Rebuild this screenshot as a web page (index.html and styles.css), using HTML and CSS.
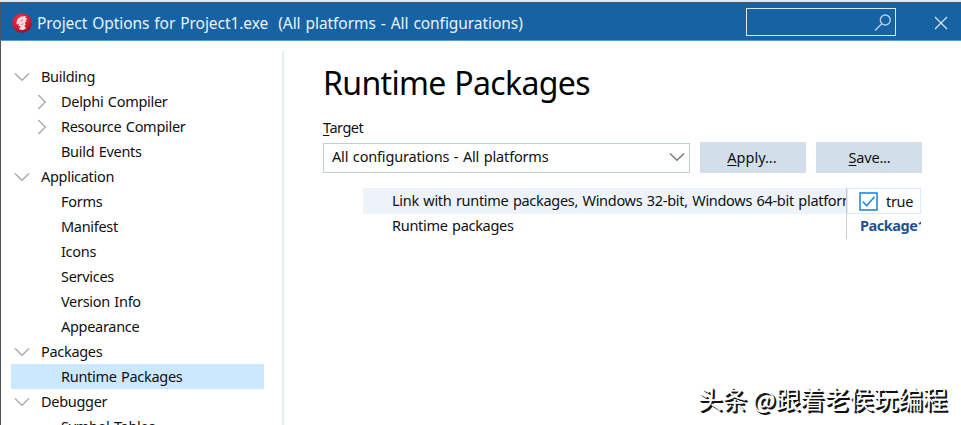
FILE: index.html
```
<!DOCTYPE html>
<html lang="en">
<head>
<meta charset="utf-8">
<title>Project Options</title>
<link rel="stylesheet" href="styles.css">
</head>
<body>
<svg class="defs" width="0" height="0" aria-hidden="true">
  <symbol id="down" viewBox="0 0 16 10"><path d="M1 1.5 8 8.3 15 1.5"/></symbol>
  <symbol id="right" viewBox="0 0 10 16"><path d="M1.3 1 8.3 8 1.3 15"/></symbol>
</svg>
<div class="window">
  <header class="titlebar">
    <svg class="logo" viewBox="0 0 20 20">
      <defs><radialGradient id="red" cx=".4" cy=".3" r=".75"><stop offset="0" stop-color="#ef3346"/><stop offset=".65" stop-color="#cf1830"/><stop offset="1" stop-color="#8c1326"/></radialGradient></defs>
      <circle cx="10" cy="10" r="9.8" fill="url(#red)"/>
      <path d="M4.4 9.4 5.6 6 9 3.4 14.6 3.2 12.8 5 15.6 5.6 13.4 7.4 14.8 8.6 12.6 9.6 13.8 11.8 12.4 12.6 14 15.4 11 17 7 16.2 8.6 13 6.4 13.2 7 11 4.8 11.6Z" fill="#fbdcdc"/>
      <path d="M8.6 8.4 11 6.6M9.6 12 11 10.4" stroke="#d8404f" stroke-width=".9" fill="none"/>
    </svg>
    <h1 class="title"><span class="t-name">Project Options for Project1.exe</span><span class="t-scope">(All platforms - All configurations)</span></h1>
    <div class="search"><svg viewBox="0 0 18 18"><circle cx="11.3" cy="6" r="5"/><path d="M7.7 9.7 1 16.5"/></svg></div>
    <svg class="close" viewBox="0 0 14 14"><path d="M1 1 13 13M13 1 1 13"/></svg>
  </header>
  <div class="body">
    <nav class="tree">
      <div class="row"><svg class="down"><use href="#down"/></svg><span>Building</span></div>
      <div class="row sub"><svg class="right"><use href="#right"/></svg><span>Delphi Compiler</span></div>
      <div class="row sub"><svg class="right"><use href="#right"/></svg><span>Resource Compiler</span></div>
      <div class="row sub leaf"><span>Build Events</span></div>
      <div class="row"><svg class="down"><use href="#down"/></svg><span>Application</span></div>
      <div class="row sub leaf"><span>Forms</span></div>
      <div class="row sub leaf"><span>Manifest</span></div>
      <div class="row sub leaf"><span>Icons</span></div>
      <div class="row sub leaf"><span>Services</span></div>
      <div class="row sub leaf"><span>Version Info</span></div>
      <div class="row sub leaf"><span>Appearance</span></div>
      <div class="row"><svg class="down"><use href="#down"/></svg><span>Packages</span></div>
      <div class="row sub leaf selected"><span>Runtime Packages</span></div>
      <div class="row"><svg class="down"><use href="#down"/></svg><span>Debugger</span></div>
      <div class="row sub leaf"><span>Symbol Tables</span></div>
    </nav>
    <main class="page">
      <h2 class="heading">Runtime Packages</h2>
      <div class="label"><u>T</u>arget</div>
      <div class="controls">
        <div class="combo"><span>All configurations - All platforms</span><svg class="down"><use href="#down"/></svg></div>
        <button class="btn"><span><u>A</u>pply...</span></button>
        <button class="btn save"><span><u>S</u>ave...</span></button>
      </div>
      <div class="grid">
        <div class="name current"><span>Link with runtime packages, Windows 32-bit, Windows 64-bit platforms</span></div>
        <div class="value editing"><svg class="check" viewBox="0 0 19 19"><rect x="1" y="1" width="17" height="17"/><path d="M3.8 9.5 7.6 13.8 15.5 4.8"/></svg><span>true</span></div>
        <div class="name"><span>Runtime packages</span></div>
        <div class="value bold"><span>Package1</span></div>
      </div>
    </main>
  </div>
  <div class="watermark">头条 @跟着老侯玩编程</div>
</div>
</body>
</html>
```

FILE: styles.css
```
* { box-sizing: border-box; }
body {
  margin: 0;
  font: 14.5px/25px "Noto Sans", "Open Sans", sans-serif;
  letter-spacing: -0.3px;
  word-spacing: 1px;
  color: #111;
  background: #fff;
}
.defs { position: absolute; }
.window {
  position: relative;
  width: 961px;
  height: 425px;
  overflow: hidden;
  border-top: 2px solid #dfe9f2;
  background: #fff;
}
.titlebar {
  display: flex;
  align-items: center;
  height: 39px;
  padding: 2px 13px 0 11px;
  border-top: 1px solid #4b535b;
  border-left: 1px solid #4b535b;
  border-bottom: 1px solid #5b9bd0;
  background: #1762a2;
}
.logo { width: 20px; height: 20px; }
.title {
  display: flex;
  gap: 10px;
  flex: 1;
  margin: 0 0 0 5px;
  padding-top: 2px;
  font-size: 15.5px;
  font-weight: 400;
  letter-spacing: -0.06px;
  color: #e9f3fb;
  white-space: pre;
}
.search {
  display: flex;
  justify-content: flex-end;
  width: 150px;
  height: 28px;
  padding: 5px 3px;
  margin: -2px 38px 0 0;
  border: 1.5px solid #d9e8f4;
}
.search svg { width: 18px; height: 18px; fill: none; stroke: #b3d0e6; stroke-width: 1.4; }
.close { width: 14px; height: 14px; fill: none; stroke: #d9e8f4; stroke-width: 1.2; }
.body {
  display: flex;
  height: 384px;
  padding-top: 10px;
  border-left: 1px solid #4b535b;
}
.tree {
  width: 283px;
  padding: 13px 18px 0 10px;
  border-right: 2px solid #e2edf7;
  overflow: hidden;
}
.row { display: flex; align-items: center; height: 25px; gap: 11px; padding-left: 3px; white-space: nowrap; }
.sub { padding-left: 26px; gap: 14px; }
.leaf { padding-left: 50px; }
.selected { background: #cce8ff; }
.down { width: 16px; height: 10px; fill: none; stroke: #aaa; stroke-width: 1.4; }
.right { width: 10px; height: 16px; fill: none; stroke: #aaa; stroke-width: 1.4; }
.page { width: 638px; padding: 9px 0 0 39px; }
.heading { margin: 0; font-size: 32px; line-height: 46px; font-weight: 400; letter-spacing: -0.65px; white-space: nowrap; color: #000; }
.label { margin: 9px 0 2px; line-height: 25px; letter-spacing: -0.5px; }
u { text-decoration: underline; text-underline-offset: 2px; text-decoration-thickness: 1px; }
.controls { display: flex; gap: 10px; height: 31px; }
.combo {
  display: flex;
  align-items: center;
  justify-content: space-between;
  width: 367px;
  height: 30px;
  margin-top: 1px;
  padding: 0 4px 2px 8px;
  border: 1px solid #c3ced4;
  letter-spacing: -0.17px;
}
.combo span { margin-top: -1px; }
.combo .down { stroke: #777; }
.btn { width: 106px; padding: 0 2px 0 0; border: 0; background: #d2dfea; font: inherit; letter-spacing: 0; color: #111; }
.save { padding: 0 0 0 1px; letter-spacing: -0.2px; }
.grid { display: grid; grid-template-columns: 484px 74px; grid-template-rows: 26px 25px; margin: 15px 0 0 40px; }
.name { padding-left: 29px; overflow: hidden; white-space: nowrap; border-right: 1px solid #cdcdcd; line-height: 23px; }
.current { background: #eef3fa; line-height: 25px; }
.value { display: flex; align-items: center; overflow: hidden; padding-left: 13px; }
.editing { gap: 8px; padding-left: 11px; border: 1px solid #d7ebfc; }
.check { width: 19px; height: 19px; fill: none; stroke: #2588dc; stroke-width: 1.6; }
.bold { align-items: flex-start; line-height: 23px; letter-spacing: -0.45px; font-weight: 700; color: #1a5593; }
.watermark {
  position: absolute;
  left: 698px;
  top: 379px;
  font: 24.5px/36px "Noto Sans CJK SC", sans-serif;
  letter-spacing: 0;
  word-spacing: 0;
  white-space: nowrap;
  color: #fff;
  text-shadow: 1px 1px 0 #111, 2px 2px 0 #111;
}
```
